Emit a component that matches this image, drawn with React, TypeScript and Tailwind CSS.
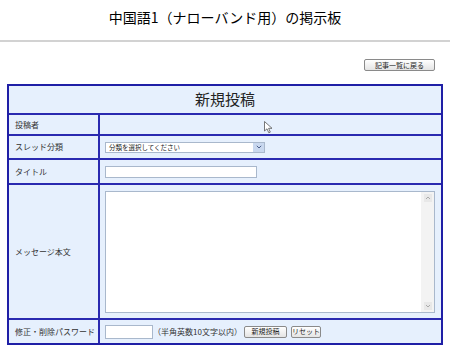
import React from "react";

const jp = { fontFamily: '"Noto Sans CJK JP", "Noto Sans", sans-serif' };

function Btn({ children, w }: { children: React.ReactNode; w: string }) {
  return (
    <div
      className={`${w} h-[12px] flex items-center justify-center rounded-[2px] border border-[#8a8a8a] bg-gradient-to-b from-[#ffffff] to-[#e4e4e4] text-[7px] leading-none text-[#222]`}
      style={jp}
    >
      {children}
    </div>
  );
}

export default function App() {
  const cell = "bg-[#e6f0fd] flex items-center";
  const label = `${cell} pl-[6px] text-[8px] text-[#333]`;
  return (
    <div className="w-[450px] h-[354px] bg-white relative overflow-hidden" style={jp}>
      <div className="pt-[9px] text-center text-[14px] leading-[16px] text-black">
        中国語1（ナローバンド用）の掲示板
      </div>
      <div className="mt-[15px] h-[2px] bg-[#d2d2d2]" />
      <div className="mt-[17px] flex justify-end pr-[15px]">
        <Btn w="w-[71px]">記事一覧に戻る</Btn>
      </div>
      <div className="mt-[13px] ml-[7px] w-[436px] border-2 border-[#1f1fa6] bg-[#2a2ab0] grid grid-cols-[89px_1fr] gap-[2px]">
        <div className={`${cell} col-span-2 h-[27px] justify-center text-[15px] text-[#222]`}>
          新規投稿
        </div>
        <div className={`${label} h-[19px]`}>投稿者</div>
        <div className={`${cell} h-[19px]`} />
        <div className={`${label} h-[22px]`}>スレッド分類</div>
        <div className={`${cell} h-[22px] pl-[5px]`}>
          <div className="w-[160px] h-[11px] flex items-center border border-[#a9b8cc] bg-white">
            <div className="flex-1 pl-[3px] text-[6.5px] leading-none text-[#222]">分類を選択してください</div>
            <div className="w-[11px] h-full bg-[#c9d8ef] flex items-center justify-center">
              <svg width="6" height="4" viewBox="0 0 6 4">
                <path d="M0.8 0.8 L3 3 L5.2 0.8" fill="none" stroke="#4a5e8a" strokeWidth="1" />
              </svg>
            </div>
          </div>
        </div>
        <div className={`${label} h-[23px]`}>タイトル</div>
        <div className={`${cell} h-[23px] pl-[5px]`}>
          <div className="w-[152px] h-[12px] border border-[#a9b8cc] bg-white" />
        </div>
        <div className={`${label} h-[133px]`}>メッセージ本文</div>
        <div className={`${cell} h-[133px] pl-[5px]`}>
          <div className="w-[330px] h-[122px] border border-[#a9b8cc] bg-white flex justify-end">
            <div className="w-[13px] h-full bg-[#f3f3f3] flex flex-col justify-between items-center py-[2px]">
              <svg width="8" height="8" viewBox="0 0 8 8">
                <rect x="0" y="0" width="8" height="8" fill="#e8e8e8" />
                <path d="M2 5 L4 3 L6 5" fill="none" stroke="#aaa" strokeWidth="1" />
              </svg>
              <svg width="8" height="8" viewBox="0 0 8 8">
                <rect x="0" y="0" width="8" height="8" fill="#e8e8e8" />
                <path d="M2 3 L4 5 L6 3" fill="none" stroke="#aaa" strokeWidth="1" />
              </svg>
            </div>
          </div>
        </div>
        <div className={`${label} h-[23px]`}>修正・削除パスワード</div>
        <div className={`${cell} h-[23px] pl-[5px]`}>
          <div className="w-[48px] h-[14px] border border-[#a9b8cc] bg-white" />
          <div className="text-[8px] text-[#333] leading-none whitespace-nowrap">（半角英数10文字以内）</div>
          <div className="ml-[2px]"><Btn w="w-[43px]">新規投稿</Btn></div>
          <div className="ml-[4px]"><Btn w="w-[30px]">リセット</Btn></div>
        </div>
      </div>
      <svg className="absolute left-[264px] top-[121px]" width="9" height="13" viewBox="0 0 9 13">
        <path d="M0.5 0.5 L0.5 10 L3 7.8 L4.8 11.8 L6.3 11.1 L4.6 7.3 L8 7.3 Z" fill="#fff" stroke="#555" strokeWidth="0.8" />
      </svg>
    </div>
  );
}
